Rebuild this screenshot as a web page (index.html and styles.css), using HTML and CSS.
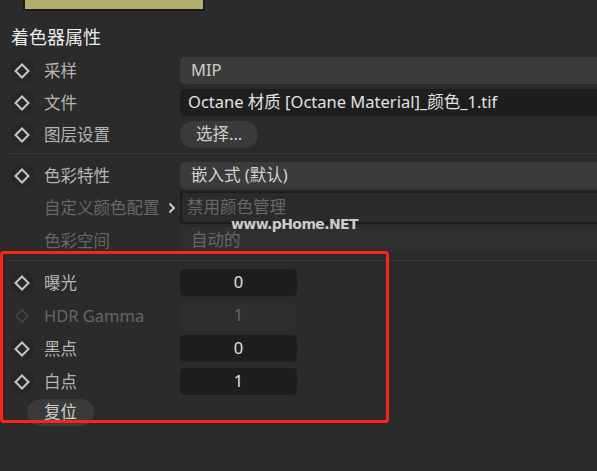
FILE: index.html
```html
<!DOCTYPE html>
<html lang="zh">
<head>
<meta charset="utf-8">
<title>着色器属性</title>
<link rel="stylesheet" href="styles.css">
</head>
<body>
<div class="panel">
  <div class="swatch"></div>
  <div class="title">着色器属性</div>

  <div class="group g1">
    <div class="row">
      <span class="key"><svg width="24" height="24" viewBox="0 0 24 24"><circle cx="12" cy="12" r="12" fill="#272727"/><polygon points="12,5.5 18.5,12 12,18.5 5.5,12" fill="none" stroke="#c6c6c6" stroke-width="2"/></svg></span>
      <span class="label">采样</span>
      <span class="field wide light">MIP</span>
    </div>
    <div class="row">
      <span class="key"><svg width="24" height="24" viewBox="0 0 24 24"><circle cx="12" cy="12" r="12" fill="#272727"/><polygon points="12,5.5 18.5,12 12,18.5 5.5,12" fill="none" stroke="#c6c6c6" stroke-width="2"/></svg></span>
      <span class="label">文件</span>
      <span class="field wide dark file">Octane 材质 [Octane Material]_颜色_1.tif</span>
    </div>
    <div class="row">
      <span class="key"><svg width="24" height="24" viewBox="0 0 24 24"><circle cx="12" cy="12" r="12" fill="#272727"/><polygon points="12,5.5 18.5,12 12,18.5 5.5,12" fill="none" stroke="#c6c6c6" stroke-width="2"/></svg></span>
      <span class="label">图层设置</span>
      <span class="btn">选择...</span>
    </div>
  </div>

  <div class="sep s1"></div>

  <div class="group g2">
    <div class="row">
      <span class="key"><svg width="24" height="24" viewBox="0 0 24 24"><circle cx="12" cy="12" r="12" fill="#272727"/><polygon points="12,5.5 18.5,12 12,18.5 5.5,12" fill="none" stroke="#c6c6c6" stroke-width="2"/></svg></span>
      <span class="label">色彩特性</span>
      <span class="field wide light sel">嵌入式 (默认)</span>
    </div>
    <div class="row tall">
      <span class="key"></span>
      <span class="label off">自定义颜色配置<svg class="chev" width="8" height="12" viewBox="0 0 8 12"><polyline points="1.5,1.5 6,6 1.5,10.5" fill="none" stroke="#d0d0d0" stroke-width="1.8"/></svg></span>
      <span class="field wide boxed off">禁用颜色管理</span>
    </div>
    <div class="row r3">
      <span class="key"></span>
      <span class="label off">色彩空间</span>
      <span class="field wide faint off">自动的</span>
    </div>
  </div>

  <div class="sep s2"></div>

  <div class="group g3">
    <div class="row">
      <span class="key"><svg width="24" height="24" viewBox="0 0 24 24"><circle cx="12" cy="12" r="12" fill="#272727"/><polygon points="12,5.5 18.5,12 12,18.5 5.5,12" fill="none" stroke="#c6c6c6" stroke-width="2"/></svg></span>
      <span class="label">曝光</span>
      <span class="num">0</span>
    </div>
    <div class="row">
      <span class="key"><svg width="24" height="24" viewBox="0 0 24 24"><polygon points="12,6 18,12 12,18 6,12" fill="none" stroke="#474747" stroke-width="1.5"/></svg></span>
      <span class="label off">HDR Gamma</span>
      <span class="num off faintnum">1</span>
    </div>
    <div class="row">
      <span class="key"><svg width="24" height="24" viewBox="0 0 24 24"><circle cx="12" cy="12" r="12" fill="#272727"/><polygon points="12,5.5 18.5,12 12,18.5 5.5,12" fill="none" stroke="#c6c6c6" stroke-width="2"/></svg></span>
      <span class="label">黑点</span>
      <span class="num">0</span>
    </div>
    <div class="row">
      <span class="key"><svg width="24" height="24" viewBox="0 0 24 24"><circle cx="12" cy="12" r="12" fill="#272727"/><polygon points="12,5.5 18.5,12 12,18.5 5.5,12" fill="none" stroke="#c6c6c6" stroke-width="2"/></svg></span>
      <span class="label">白点</span>
      <span class="num">1</span>
    </div>
  </div>

  <div class="reset"><span class="btn">复位</span></div>

  <div class="watermark">www.pHome.NET</div>
  <div class="highlight"></div>
</div>
</body>
</html>
```
FILE: styles.css
```css
html, body {
  margin: 0;
  padding: 0;
  background: #2b2b2b;
  overflow: hidden;
}
body {
  width: 597px;
  height: 471px;
  font-family: "Noto Sans", "Noto Sans CJK SC", sans-serif;
  font-size: 16.5px;
  color: #b5b5b5;
}
.panel {
  position: relative;
  width: 597px;
  height: 471px;
}
.swatch {
  margin-left: 23px;
  width: 178px;
  height: 9px;
  background: #b3b06f;
  border: 2px solid #1c1c1c;
  border-top: none;
}
.title {
  margin-top: 14px;
  padding-left: 11px;
  height: 24px;
  line-height: 24px;
  font-size: 18px;
  color: #ececec;
}
.group {
  display: flex;
  flex-direction: column;
}
.g1 {
  margin-top: 8px;
  gap: 5px;
}
.g2 {
  margin-top: 8px;
  gap: 2px;
}
.g3 {
  margin-top: 8px;
  gap: 6px;
}
.row {
  display: grid;
  grid-template-columns: 44px 136px 1fr;
  align-items: center;
  height: 27px;
}
.row.tall {
  height: 33px;
}
.row.r3 {
  margin-top: 1px;
}
.key {
  display: flex;
  align-items: center;
  justify-content: center;
  width: 44px;
  height: 27px;
  padding-right: 1px;
  box-sizing: border-box;
}
.key svg {
  display: block;
}
.label {
  display: flex;
  align-items: center;
  white-space: nowrap;
  line-height: 26px;
}
.label.off, .field.off, .num.off {
  color: #676767;
}
.chev {
  margin-left: 8px;
}
.field {
  box-sizing: border-box;
  height: 27px;
  line-height: 26px;
  white-space: nowrap;
  overflow: hidden;
  border-radius: 5px 0 0 5px;
}
.field.light {
  background: #3b3b3b;
  color: #cdcdcd;
  padding-left: 11px;
}
.field.sel {
  color: #d2d2d2;
}
.field.dark {
  background: #1e1e1e;
  color: #e2e2e2;
  padding-left: 8px;
}
.field.boxed {
  height: 33px;
  line-height: 28px;
  border: 2px solid #1d1d1d;
  border-right: none;
  border-radius: 3px 0 0 3px;
  padding-left: 5px;
  background: #2b2b2b;
}
.field.faint {
  background: #2f2f2f;
  padding-left: 11px;
}
.btn {
  justify-self: start;
  display: inline-block;
  height: 27px;
  line-height: 26px;
  padding: 0 16px;
  border-radius: 14px;
  background: #3a3a3a;
  color: #cfcfcf;
}
.num {
  box-sizing: border-box;
  width: 117px;
  height: 27px;
  line-height: 26px;
  text-align: center;
  background: #1e1e1e;
  border-radius: 5px;
  color: #e2e2e2;
}
.num.faintnum {
  background: #2e2e2e;
}
.sep {
  margin-left: 8px;
  height: 1px;
  background: #383838;
}
.s1 {
  margin-top: 5px;
}
.s2 {
  margin-top: 6px;
}
.reset {
  margin-top: 4px;
  padding-left: 27px;
}
.reset .btn {
  padding: 0 17px;
}
.watermark {
  position: absolute;
  left: 231px;
  top: 215px;
  font-family: "DejaVu Sans", sans-serif;
  font-weight: bold;
  font-size: 14px;
  letter-spacing: -0.6px;
  line-height: 18px;
  color: #cbcbcb;
}
.highlight {
  position: absolute;
  left: 0;
  top: 251px;
  width: 389px;
  height: 172px;
  box-sizing: border-box;
  border: 3.5px solid #fa2516;
  border-radius: 4px;
}
```
